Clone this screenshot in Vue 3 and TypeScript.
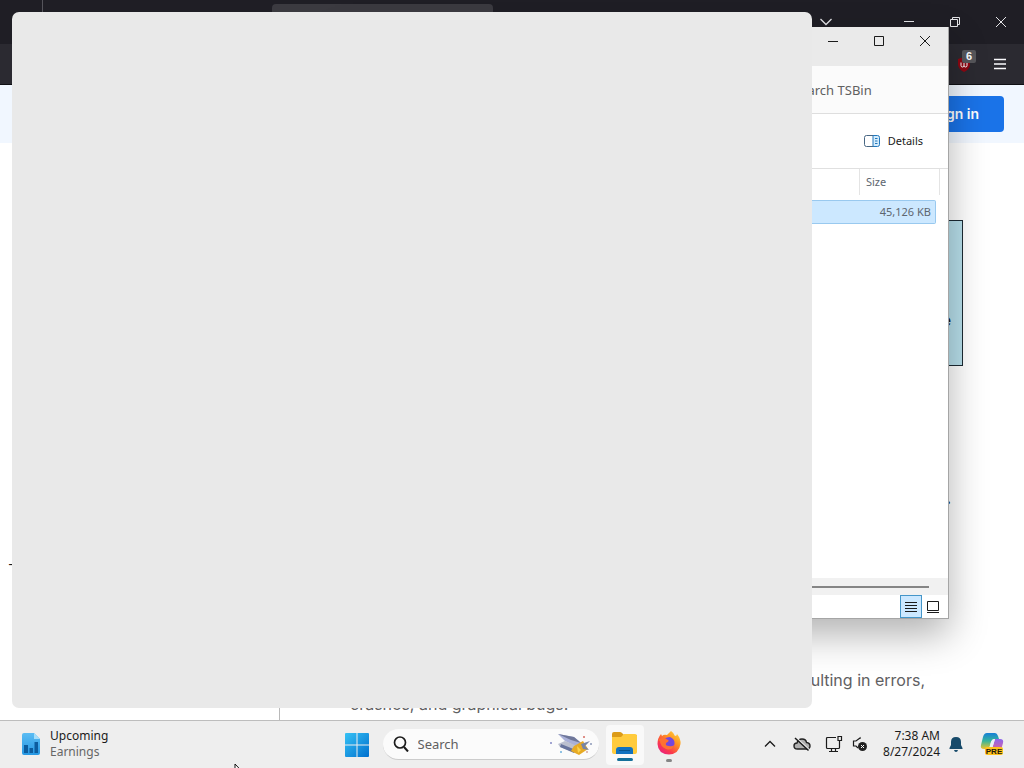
<script setup lang="ts">
import { ref } from 'vue'

interface FileRow {
  size: string
}

const files: FileRow[] = [{ size: '45,126 KB' }]
const selected = ref(0)
const view = ref<'details' | 'large'>('details')
const query = ref('')
</script>

<template>
  <div class="desktop">
    <div class="browser">
      <div class="tabs">
        <i class="divider"></i>
        <i class="tab"></i>
        <button class="bare drop" aria-label="List all tabs">
          <svg width="12" height="12" viewBox="0 0 12 12"><path d="M.5 3 6 8.500 11.500 3" stroke-width="1.300" /></svg>
        </button>
        <div class="controls">
          <button class="bare" aria-label="Minimize browser">
            <svg width="12" height="12" viewBox="0 0 12 12"><path d="M1 5.500H11" /></svg>
          </button>
          <button class="bare" aria-label="Restore browser">
            <svg width="12" height="12" viewBox="0 0 12 12"><path d="M1.500 3.500H8.500V10.500H1.500ZM3.500 3.500V1.500H10.500V8.500H8.500" /></svg>
          </button>
          <button class="bare" aria-label="Close browser">
            <svg width="12" height="12" viewBox="0 0 12 12"><path d="M1 1 11 11M11 1 1 11" /></svg>
          </button>
        </div>
      </div>
      <div class="toolbar">
        <button class="bare ext" aria-label="Content blocker">
          <svg width="16" height="16" viewBox="0 0 16 16">
            <path d="M8 1 14 3V9Q13 14 8 16Q3 14 2 9V3Z" fill="#8d0712" stroke="none" />
            <path d="M5 6.500V9.500Q5 11 6.500 11T8 9.500V7M8 9.500Q8 11 9.500 11T11 9.500V6.500" stroke="#fff" />
          </svg>
          <span class="badge">6</span>
        </button>
        <button class="bare" aria-label="Application menu">
          <svg width="14" height="14" viewBox="0 0 14 14"><path d="M1 2.500H13M1 7H13M1 11.500H13" stroke-width="1.400" /></svg>
        </button>
      </div>
      <header class="site"><a class="signin" href="#">Sign in</a></header>
      <main class="page">
        <aside><span>-</span></aside>
        <article>
          <div class="callout"><b>e</b></div>
          <p class="stop">.</p>
          <p class="issues"><span class="end">resulting in errors,</span><span>crashes, and graphical bugs.</span></p>
        </article>
      </main>
    </div>

    <section class="explorer">
      <div class="titlebar">
        <button class="bare" aria-label="Minimize">
          <svg width="12" height="12" viewBox="0 0 12 12"><path d="M1 6.500H11" /></svg>
        </button>
        <button class="bare" aria-label="Maximize">
          <svg width="12" height="12" viewBox="0 0 12 12"><path d="M1.500 1.500H10.500V10.500H1.500Z" /></svg>
        </button>
        <button class="bare" aria-label="Close">
          <svg width="12" height="12" viewBox="0 0 12 12"><path d="M1 1 11 11M11 1 1 11" /></svg>
        </button>
      </div>
      <div class="address"><input v-model="query" type="text" aria-label="Search folder" placeholder="Search TSBin" /></div>
      <div class="commands">
        <button class="bare details">
          <svg width="16" height="12" viewBox="0 0 16 12">
            <path d="M9 .5H13.500Q15.500 .5 15.500 2.500V9.500Q15.500 11.500 13.500 11.500H9Z" fill="#d5ecfb" stroke="#2478bd" />
            <path d="M9 .5H2.500Q.5 .5 .5 2.500V9.500Q.5 11.500 2.500 11.500H9" stroke="#486783" />
            <path d="M11 3.500H13.500M11 6H13.500M11 8.500H13.500" stroke="#2478bd" />
          </svg>
          Details
        </button>
      </div>
      <div class="listing">
        <table>
          <colgroup><col /><col class="value" /><col class="gutter" /></colgroup>
          <thead>
            <tr><td></td><th scope="col" colspan="2">Size</th></tr>
          </thead>
          <tbody>
            <tr v-for="(file, i) in files" :key="i" :class="{ picked: selected === i }" @click="selected = i">
              <td></td>
              <td class="size">{{ file.size }}</td>
            </tr>
          </tbody>
        </table>
      </div>
      <div class="scroll"><i></i></div>
      <div class="status">
        <button class="bare" :class="{ on: view === 'details' }" aria-label="Details view" @click="view = 'details'">
          <svg width="12" height="12" viewBox="0 0 12 12"><path d="M0 1.500H12M0 4.500H12M0 7.500H12M0 10.500H12" /></svg>
        </button>
        <button class="bare" :class="{ on: view === 'large' }" aria-label="Large icons view" @click="view = 'large'">
          <svg width="12" height="12" viewBox="0 0 12 12"><path d="M.5 .5H11.500V9.500H.5ZM0 11.500H12" /></svg>
        </button>
      </div>
    </section>

    <section class="blank" aria-label="Application window"></section>

    <footer class="taskbar">
      <button class="bare widget">
        <svg width="20" height="22" viewBox="0 0 20 22">
          <defs><linearGradient id="doc" x2="0" y2="1"><stop stop-color="#5bbcf3" /><stop offset="1" stop-color="#2497e3" /></linearGradient></defs>
          <path d="M3 0H13L19 6V20Q19 22 17 22H3Q1 22 1 20V2Q1 0 3 0Z" fill="url(#doc)" />
          <path d="M13 0 19 6H13Z" fill="#a5defa" />
          <path d="M3 12H7V20H3ZM8.500 15H12V20H8.500ZM13.500 9H17V20H13.500Z" fill="#0c5c9e" />
        </svg>
        <span class="lines"><span>Upcoming</span><span class="dim">Earnings</span></span>
      </button>

      <nav class="apps">
        <button class="bare start" aria-label="Start">
          <svg width="24" height="24" viewBox="0 0 24 24">
            <defs><linearGradient id="win" x2="1" y2="1"><stop stop-color="#36c2f5" /><stop offset="1" stop-color="#006fce" /></linearGradient></defs>
            <path d="M0 1Q0 0 1 0H11.500V11.500H0ZM12.500 0H23Q24 0 24 1V11.500H12.500ZM0 12.500H11.500V24H1Q0 24 0 23ZM12.500 12.500H24V23Q24 24 23 24H12.500Z" fill="url(#win)" />
          </svg>
        </button>
        <label class="search">
          <svg width="16" height="16" viewBox="0 0 16 16"><path d="M11 11 15 15.500" stroke-width="2" /><circle cx="7" cy="6.500" r="5.500" stroke-width="1.700" /></svg>
          <input type="text" placeholder="Search" aria-label="Search" />
          <svg width="44" height="24" viewBox="0 0 44 24">
            <path d="M9 2 25 5 35 13 30 16 16 9Z" fill="#a9b0d8" />
            <path d="M9 2 25 5 32 11 22 8Z" fill="#6f7799" />
            <path d="M9 12 16 9 31 15 29 22 11 15Z" fill="#bcc0cf" />
            <path d="M12 12 27 18 25 21 11 15Z" fill="#68749d" />
            <path d="M25 14 34 9 39 17 30 23 22 19Z" fill="#e7aa24" />
            <path d="M32 12 41 9 36 14 40 18 34 17Z" fill="#7886a4" />
            <path d="M28 14 32 18 29 21Z" fill="#fbd44f" />
            <g><circle cx="2" cy="11" r="1" fill="#8489c4" /><circle cx="35" cy="5" r="1" fill="#d46b62" /><circle cx="12" cy="20" r="1" fill="#6eb1dc" /><circle cx="42" cy="12" r="1" fill="#8c99b9" /><circle cx="38" cy="20" r="1" fill="#d4a6a0" /></g>
          </svg>
        </label>
        <button class="bare app active" aria-label="File Explorer">
          <svg width="26" height="22" viewBox="0 0 26 22">
            <path d="M0 2Q0 0 2 0H8Q9 0 10 1L12 3H24Q25 3 25 4V10H0Z" fill="#dc9b18" />
            <path d="M0 5H9L12 2H23Q25 2 25 4V20Q25 22 23 22H2Q0 22 0 20Z" fill="#ffcb3d" />
            <path d="M4 22V18Q4 15 7 15H18Q21 15 21 18V22Z" fill="#1272bf" />
            <path d="M7 18.500H18" stroke="#0a568f" />
          </svg>
          <i></i>
        </button>
        <button class="bare app" aria-label="Firefox">
          <svg width="24" height="24" viewBox="0 0 24 24">
            <defs><linearGradient id="fox" x1="1" x2=".2" y2="1"><stop stop-color="#ffe045" /><stop offset=".4" stop-color="#ff9620" /><stop offset=".75" stop-color="#fb394c" /><stop offset="1" stop-color="#e91f82" /></linearGradient></defs>
            <path d="M14 0Q17 2 18 5Q20 5 20 3Q24 8 23.500 13Q22 23 12 23.500Q1 23 .5 13Q.5 7 4 3L5 5Q7 3 10 4Q12 2 14 0Z" fill="url(#fox)" />
            <path d="M7 9Q9 6 13 6Q18 8 17.500 13Q16 18 11 18Q6 16 6.500 12Z" fill="#7547dd" />
            <path d="M1 9Q6 5 11 9Q13 10 9 12Q8 15 12 15Q15 16 17 14Q15 20 9 18Q3 15 3 10Z" fill="#ff7132" />
          </svg>
          <i></i>
        </button>
      </nav>

      <div class="tray">
        <button class="bare" aria-label="Show hidden icons"><svg width="12" height="12" viewBox="0 0 12 12"><path d="M1 8.500 6 3.500 11 8.500" stroke-width="1.300" /></svg></button>
        <button class="bare" aria-label="OneDrive">
          <svg width="18" height="16" viewBox="0 0 18 16"><path d="M4.500 13Q1 13 1 10T4 7Q5 3 9 3T13.500 6.500Q17 7 17 10T13.500 13Z" fill="#b0b0b0" stroke="#222" stroke-width="1.400" /><path d="M3 1.500 16 13.500" stroke="#eee" stroke-width="1.500" /><path d="M2 2 15.500 14.500" stroke-width="1.500" /></svg>
        </button>
        <button class="bare" aria-label="Network">
          <svg width="18" height="18" viewBox="0 0 18 18"><path d="M11 2.500H2.500Q1.500 2.500 1.500 3.500V12.500Q1.500 13.500 2.500 13.500H13.500Q14.500 13.500 14.500 12.500V8M6.500 13.500V16.500M10.500 13.500V16.500M4 16.500H13M13 1.500H16.500V5.500H13ZM14.500 6V8" stroke-width="1.200" /></svg>
        </button>
        <button class="bare sound" aria-label="Volume muted">
          <svg width="16" height="16" viewBox="0 0 16 16"><path d="M8 3V2L4 5H1.500V10H4L6 12" stroke-width="1.200" /><circle cx="10.500" cy="10.500" r="4.500" fill="#222" stroke="none" /><path d="M9 9 12 12M12 9 9 12" stroke="#fff" /></svg>
        </button>
        <button class="bare clock"><span>7:38 AM</span><span>8/27/2024</span></button>
        <button class="bare" aria-label="Notifications">
          <svg width="14" height="16" viewBox="0 0 14 16"><path d="M7 1Q12 1 12 6V9L13.500 12V13H.5V12L2 9V6Q2 1 7 1ZM5 14H9Q8.500 16 7 16T5 14Z" fill="#174a6a" stroke="none" /></svg>
        </button>
        <button class="bare copilot" aria-label="Copilot">
          <svg width="26" height="24" viewBox="0 0 26 24">
            <defs><linearGradient id="cpa" x2="0" y2="1"><stop stop-color="#167fd8" /><stop offset=".5" stop-color="#36b59c" /><stop offset="1" stop-color="#f0c32c" /></linearGradient><linearGradient id="cpb" x2="0" y2="1"><stop stop-color="#8b66ed" /><stop offset="1" stop-color="#f0638a" /></linearGradient></defs>
            <path d="M8 1H16Q18 1 19 4L20 7H15Q13 7 12 10L10 17H5Q1 17 2 13L4 5Q5 1 8 1Z" fill="url(#cpa)" />
            <path d="M16 7H21Q25 7 24 11L22 18Q21 21 18 21H9Q12 21 13 17Z" fill="url(#cpb)" />
            <path d="M12 10Q13 7 16 7L13 17H10Z" fill="#e9f1f6" />
            <path d="M8 15H22Q24 15 24 17V21Q24 23 22 23H8Q6 23 6 21V17Q6 15 8 15Z" fill="#ffc21c" />
            <text x="15" y="22" text-anchor="middle">PRE</text>
          </svg>
        </button>
      </div>
    </footer>

    <svg class="cursor" width="12" height="18" viewBox="0 0 12 18"><path d="M1 1V14L4 11L6 16L8 15L6 10.500H10Z" /></svg>
  </div>
</template>

<style>
body {
  margin: 0;
  overflow: hidden;
}
</style>

<style scoped>
* {
  box-sizing: border-box;
}
.desktop {
  position: relative;
  display: flex;
  flex-direction: column;
  height: 100vh;
  overflow: hidden;
  background: #fff;
  color: #1b1b1b;
  font: 12px/16px "Noto Sans", "Open Sans", sans-serif;
}
svg {
  display: block;
  flex: none;
  fill: none;
  stroke: currentColor;
}
svg [fill^="#"]:not([stroke]),
svg [fill^="url"] {
  stroke: none;
}
.bare {
  display: flex;
  align-items: center;
  justify-content: center;
  padding: 0;
  border: 0;
  background: none;
  color: inherit;
  font: inherit;
}
.browser {
  flex: 1;
  min-height: 0;
  display: flex;
  flex-direction: column;
  overflow: hidden;
  font-family: Inter, sans-serif;
}
.tabs {
  flex: none;
  display: flex;
  height: 44px;
  background: #1f1e25;
  color: #e5e5e8;
}
.divider {
  width: 43px;
  border-right: 1px solid #55545b;
}
.tab {
  width: 221px;
  margin: 4px 0 4px 229px;
  border-radius: 4px;
  background: #3b3a40;
}
.drop {
  margin-left: auto;
  width: 44px;
}
.controls {
  display: flex;
  margin-left: 38px;
}
.controls .bare {
  width: 46px;
}
.toolbar {
  flex: none;
  display: flex;
  justify-content: flex-end;
  gap: 21px;
  height: 41px;
  padding-right: 17px;
  border-bottom: 1px solid #101014;
  background: #2b2a31;
  color: #fbfbfe;
}
.ext {
  position: relative;
  width: 16px;
}
.badge {
  position: absolute;
  top: 6px;
  left: 6px;
  width: 14px;
  border-radius: 2px;
  background: #56565a;
  font: bold 11px/13px "Liberation Sans", sans-serif;
}
.site {
  flex: none;
  display: flex;
  align-items: center;
  justify-content: flex-end;
  height: 58px;
  padding-right: 20px;
  background: #f1f7ff;
}
.signin {
  padding: 0 25px;
  border-radius: 4px;
  background: #1a73e8;
  color: #fff;
  font-size: 14px;
  font-weight: 600;
  line-height: 36px;
  text-decoration: none;
}
.page {
  flex: 1;
  display: flex;
}
aside {
  width: 280px;
  padding: 413px 0 0 8px;
  border-right: 1px solid #b9b9b9;
  font-size: 14px;
}
article {
  flex: 1;
  padding: 77px 61px 0 70px;
  font-size: 16px;
  line-height: 24px;
}
.callout {
  height: 146px;
  padding: 87px 11px 0;
  border: 1px solid #1c2a33;
  background: #b8e0ec;
  text-align: right;
}
p {
  margin: 0;
}
.stop {
  padding: 120px 12px 0;
  font-weight: bold;
  text-align: right;
}
.issues {
  padding: 158px 38px 0 0;
  color: #5f6062;
}
.issues span {
  display: block;
}
.issues .end {
  text-align: right;
}
.explorer {
  position: absolute;
  top: 27px;
  right: 75px;
  bottom: 149px;
  width: 60%;
  display: flex;
  flex-direction: column;
  border-right: 1px solid #a5a5a5;
  border-bottom: 1px solid #a5a5a5;
  background: #fff;
  box-shadow: 0 16px 36px rgba(0, 0, 0, 0.3);
}
.titlebar {
  display: flex;
  justify-content: flex-end;
  align-items: flex-start;
  height: 39px;
  background: #eaeaea;
}
.titlebar .bare {
  width: 46px;
  height: 28px;
}
.address {
  display: flex;
  justify-content: flex-end;
  height: 48px;
  border-bottom: 1px solid #dedede;
  background: #fbfbfb;
}
input {
  min-width: 0;
  padding: 0;
  border: 0;
  outline: 0;
  background: none;
  color: inherit;
  font: inherit;
}
input::placeholder {
  color: #606060;
  opacity: 1;
}
.address input {
  width: 155px;
  font-size: 13px;
}
.commands {
  display: flex;
  justify-content: flex-end;
  height: 55px;
  padding-right: 25px;
  border-bottom: 1px solid #e0e0e0;
  font-size: 11px;
}
.details {
  gap: 8px;
}
.listing {
  flex: 1;
  display: flex;
  align-items: flex-start;
  padding-right: 8px;
}
table {
  width: 100%;
  table-layout: fixed;
  border-spacing: 0;
  font-size: 11px;
  color: #5d6670;
}
.value {
  width: 76px;
}
.gutter {
  width: 4px;
}
td,
th {
  padding: 0;
  font-weight: normal;
}
thead td,
thead th {
  height: 26px;
  border-right: 1px solid #e4e4e4;
}
thead th {
  padding-left: 6px;
  text-align: left;
}
tbody::before {
  content: "";
  display: block;
  height: 5px;
}
tbody td {
  height: 24px;
}
.picked td {
  border: solid #99c9ef;
  border-width: 1px 0;
  background: #cce8ff;
}
.picked .size {
  border-right-width: 1px;
  border-radius: 0 2px 2px 0;
}
.size {
  padding-right: 4px;
  text-align: right;
}
.scroll {
  display: flex;
  align-items: center;
  height: 17px;
  padding-right: 19px;
  background: #f1f1f1;
}
.scroll i {
  flex: 1;
  height: 2px;
  background: #858585;
}
.status {
  display: flex;
  justify-content: flex-end;
  height: 23px;
  padding-right: 4px;
}
.status .bare {
  width: 22px;
  height: 23px;
  border: 1px solid transparent;
}
.status .on {
  border-color: #4596c9;
  background: #cce8ff;
}
.blank {
  position: absolute;
  inset: 12px 212px 60px 12px;
  border-radius: 7px;
  background: #e9e9e9;
}
.taskbar {
  position: relative;
  flex: none;
  display: flex;
  align-items: center;
  justify-content: space-between;
  height: 48px;
  padding: 0 19px 2px 21px;
  border-top: 1px solid #bdbdbd;
  background: #eee;
}
.widget {
  gap: 9px;
}
.lines {
  display: flex;
  flex-direction: column;
  text-align: left;
}
.dim {
  color: #666;
}
.apps {
  position: absolute;
  top: 0;
  left: 0;
  right: 0;
  display: flex;
  align-items: center;
  justify-content: center;
  height: 47px;
  padding-left: 3px;
}
.start {
  width: 46px;
  height: 40px;
}
.search {
  display: flex;
  align-items: center;
  width: 216px;
  height: 31px;
  margin: 0 7px 0 3px;
  padding: 0 6px 0 10px;
  border-bottom: 1px solid #ccc;
  border-radius: 16px;
  background: #fbfbfb;
  font-size: 13px;
}
.search input {
  flex: 1;
  margin-left: 9px;
}
.app {
  flex-direction: column;
  gap: 4px;
  width: 38px;
  height: 40px;
  padding-top: 4px;
  margin-right: 6px;
  border-radius: 4px;
}
.app i {
  width: 6px;
  height: 3px;
  border-radius: 2px;
  background: #858585;
}
.app.active {
  background: #f9f9f9;
}
.active i {
  width: 16px;
  background: #15709a;
}
.widget,
.tray {
  position: relative;
}
.tray {
  display: flex;
  align-items: center;
}
.tray .bare {
  width: 32px;
}
.tray .sound {
  width: 20px;
}
.tray .clock {
  flex-direction: column;
  align-items: flex-end;
  width: 70px;
}
.tray .copilot {
  width: 26px;
  margin-left: 7px;
}
.copilot text {
  fill: #20180b;
  stroke: none;
  font: bold 8px "Liberation Sans", sans-serif;
}
.cursor {
  position: absolute;
  left: 234px;
  top: 763px;
  fill: #fff;
  stroke: #111;
}
</style>
